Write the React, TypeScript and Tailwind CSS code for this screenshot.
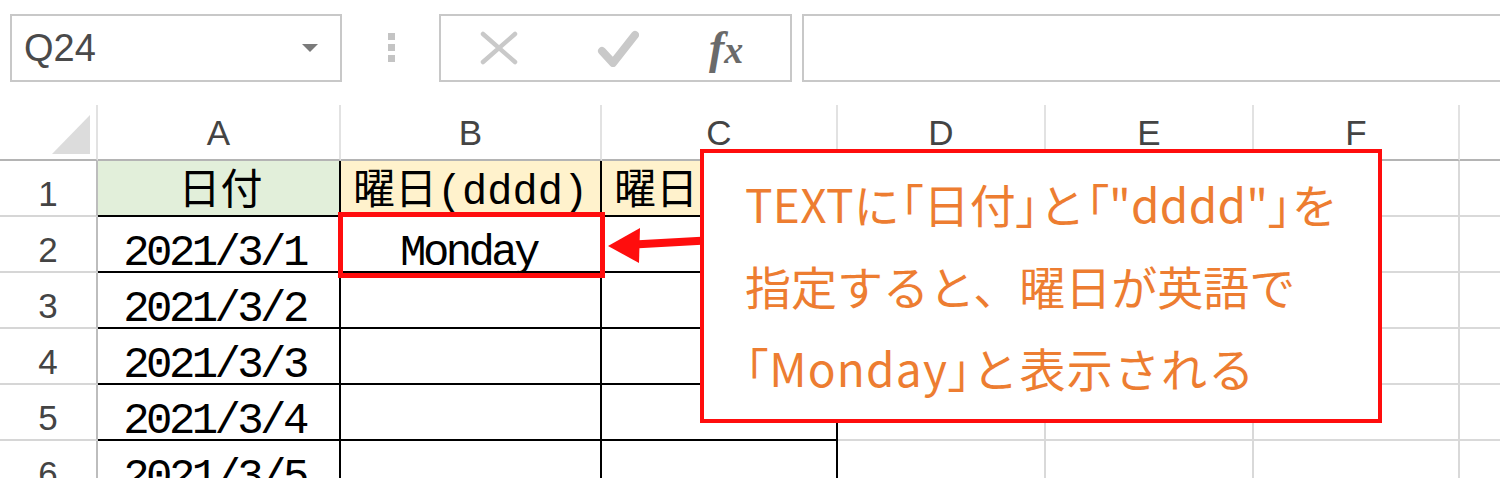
import React from 'react';

const cols = ['A', 'B', 'C', 'D', 'E', 'F', ''];

const rows: { a: string; b: string; c: string }[] = [
  { a: '日付', b: '曜日(dddd)', c: '曜日(ddd)' },
  { a: '2021/3/1', b: 'Monday', c: '' },
  { a: '2021/3/2', b: '', c: '' },
  { a: '2021/3/3', b: '', c: '' },
  { a: '2021/3/4', b: '', c: '' },
  { a: '2021/3/5', b: '', c: '' },
];

function FormulaBar() {
  return (
    <div className="flex h-[105px] items-start pl-[10px] pt-[14px]">
      {/* name box */}
      <div className="flex h-[68px] w-[332px] items-center justify-between border-2 border-[#c8c8c8] pl-[12px] pr-[22px]">
        <span className="font-['Liberation_Sans',sans-serif] text-[38px] leading-none text-[#4a4a4a]">Q24</span>
        <svg width="16" height="8" viewBox="0 0 16 8">
          <polygon points="0,0 16,0 8,8" fill="#7a7a7a" />
        </svg>
      </div>

      {/* grip dots */}
      <div className="ml-[46px] mt-[19px] flex w-[7px] flex-col gap-[4px]">
        <span className="h-[7px] w-[7px] bg-[#c4c4c4]" />
        <span className="h-[7px] w-[7px] bg-[#c4c4c4]" />
        <span className="h-[7px] w-[7px] bg-[#c4c4c4]" />
      </div>

      {/* cancel / enter / fx */}
      <div className="ml-[44px] flex h-[68px] w-[353px] items-center border-2 border-[#c8c8c8]">
        <svg className="ml-[39px]" width="38" height="34" viewBox="0 0 38 34">
          <path d="M3 3 L35 31 M35 3 L3 31" stroke="#c9c9c9" strokeWidth="4.5" strokeLinecap="round" />
        </svg>
        <svg className="ml-[79px]" width="42" height="38" viewBox="0 0 42 38">
          <path d="M5 22 L16 34 L38 6" stroke="#c9c9c9" strokeWidth="8" fill="none" strokeLinejoin="round" strokeLinecap="round" />
        </svg>
        <span className="ml-[70px] font-['Liberation_Serif',serif] text-[46px] font-bold italic leading-none text-[#6a6a6a]">
          f<span className="text-[38px]">x</span>
        </span>
      </div>

      {/* formula input */}
      <div className="ml-[10px] h-[68px] flex-1 border-y-2 border-l-2 border-[#c8c8c8]" />
    </div>
  );
}

function Grid() {
  const latin = "font-['Liberation_Mono','Noto_Sans_CJK_JP',monospace] text-[44px] tracking-[-3.6px] leading-[35px] text-black";
  const jp = "font-['Liberation_Mono','Noto_Sans_CJK_JP',monospace] text-[42px] leading-none text-black";

  return (
    <div className="grid grid-cols-[98px_243px_261px_236px_208px_208px_206px_60px]">
      {/* column headers */}
      <div className="flex h-[56px] items-end justify-end border-b-2 border-r-2 border-b-[#b4b4b4] border-r-[#e2e2e2] pb-[5px] pr-[6px]">
        <svg width="38" height="39" viewBox="0 0 38 39">
          <polygon points="38,0 38,39 0,39" fill="#dcdcdc" />
        </svg>
      </div>
      {cols.map((c, i) => (
        <div
          key={i}
          className="flex h-[56px] items-center justify-center border-b-2 border-r-2 border-b-[#b4b4b4] border-r-[#e2e2e2] font-['Liberation_Sans',sans-serif] text-[35px] leading-none text-[#444]"
        >
          {c}
        </div>
      ))}

      {rows.map((r, i) => (
        <React.Fragment key={i}>
          <div className="flex h-[56px] items-end justify-center border-b-2 border-r-2 border-b-[#d6d6d6] border-r-[#bdbdbd] pb-[4px] font-['Liberation_Sans',sans-serif] text-[35px] leading-none text-[#444]">
            {i + 1}
          </div>
          <div
            className={`flex h-[56px] items-end justify-center whitespace-nowrap border-b-2 border-r-2 border-black ${
              i === 0 ? `bg-[#e2efda] pb-[1px] pl-[4px] ${jp}` : `bg-white pr-[8px] ${latin}`
            }`}
          >
            {r.a}
          </div>
          <div
            className={`flex h-[56px] items-end justify-center whitespace-nowrap border-b-2 border-r-2 border-black ${
              i === 0 ? `bg-[#fff2cc] pb-[1px] ${jp}` : `bg-white pr-[4px] ${latin}`
            }`}
          >
            {r.b}
          </div>
          <div
            className={`flex h-[56px] items-end justify-center whitespace-nowrap border-b-2 border-r-2 border-black ${
              i === 0 ? `bg-[#fff2cc] pb-[1px] ${jp}` : `bg-white ${latin}`
            }`}
          >
            {r.c}
          </div>
          <div className="h-[56px] border-b-2 border-r-2 border-[#d9d9d9]" />
          <div className="h-[56px] border-b-2 border-r-2 border-[#d9d9d9]" />
          <div className="h-[56px] border-b-2 border-r-2 border-[#d9d9d9]" />
          <div className="h-[56px] border-b-2 border-[#d9d9d9]" />
        </React.Fragment>
      ))}
    </div>
  );
}

function Br({ c }: { c: string }) {
  return <span className="[font-feature-settings:'palt']">{c}</span>;
}

export default function App() {
  return (
    <div className="relative h-[478px] w-[1500px] overflow-hidden bg-white">
      <FormulaBar />
      <Grid />

      {/* highlight on B2 */}
      <div className="absolute left-[338px] top-[212px] h-[66px] w-[267px] border-[5px] border-[#ff0d0d]" />

      {/* arrow from the note to B2 */}
      <svg className="absolute left-[600px] top-[220px]" width="110" height="50" viewBox="0 0 110 50">
        <path d="M34 24.5 L106 20.5" stroke="#ff0d0d" strokeWidth="8" />
        <polygon points="8,26 40,8 39,43" fill="#ff0d0d" />
      </svg>

      {/* callout */}
      <div className="absolute left-[700px] top-[149px] h-[274px] w-[682px] border-4 border-[#ff0d0d] bg-white pl-[41px] pt-[9px] font-['Noto_Sans_CJK_JP',sans-serif] text-[46px] leading-[82px] text-[#ed7d31]">
        <p className="whitespace-nowrap tracking-[0.3px]">
          TEXTに<Br c="「" />日付<Br c="」" />と<Br c="「" />"dddd"<Br c="」" />を
        </p>
        <p className="whitespace-nowrap">指定すると、曜日が英語で</p>
        <p className="whitespace-nowrap tracking-[1.2px]">
          <Br c="「" />Monday<Br c="」" />と表示される
        </p>
      </div>
    </div>
  );
}
